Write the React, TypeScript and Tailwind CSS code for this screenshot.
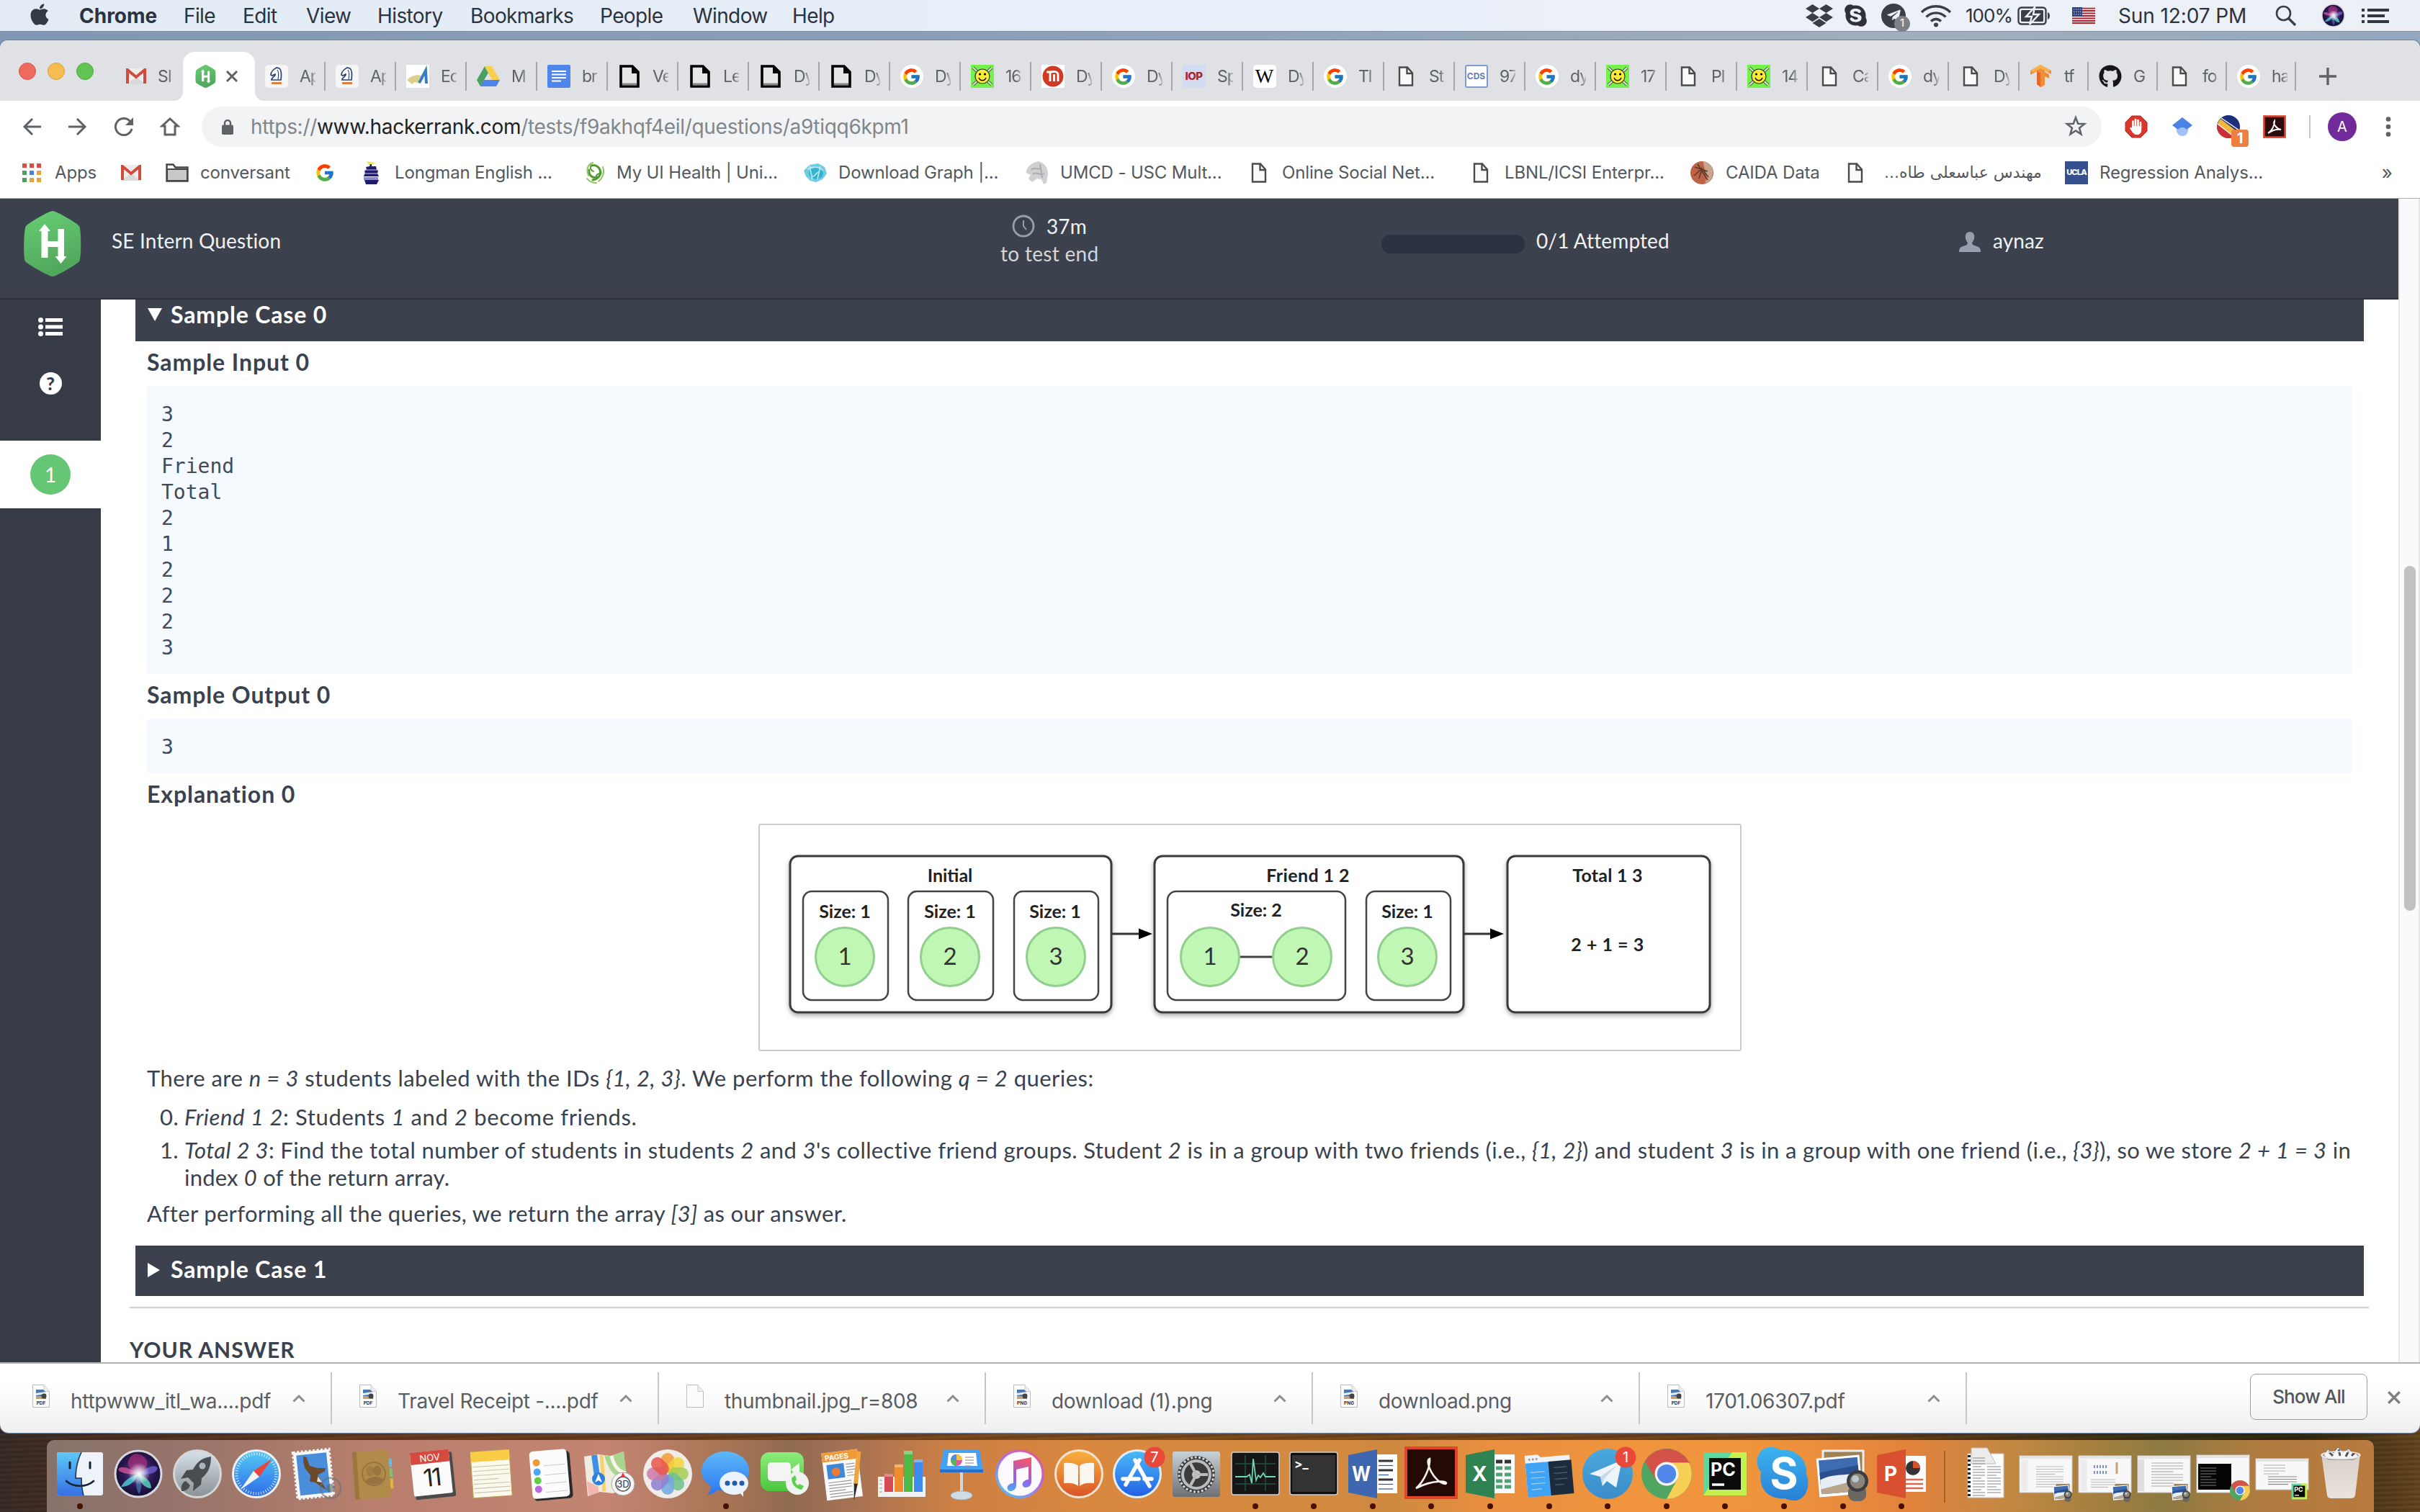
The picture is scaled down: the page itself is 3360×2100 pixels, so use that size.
import React from "react";
import { FaApple, FaDropbox, FaSkype, FaGithub, FaTelegramPlane } from "react-icons/fa";
import { FcGoogle } from "react-icons/fc";

/* ---------- small icons ---------- */

const Gmail = () => (
  <svg width="28" height="22" viewBox="0 0 28 22">
    <rect x="1" y="0" width="26" height="22" rx="2" fill="#ececec" />
    <path d="M14 12 27 22H1z" fill="#d9d9d9" />
    <path d="M2 21V2l12 10L26 2v19" fill="none" stroke="#d24a3e" strokeWidth="4" />
  </svg>
);
const FileIcon = ({ bold = false }: { bold?: boolean }) =>
  bold ? (
    <svg width="28" height="32" viewBox="0 0 28 32">
      <path d="M2 2h16l8 8v20H2z" fill="#e6e6e8" stroke="#000" strokeWidth="3.600" />
      <path d="M17 2v10h9z" fill="#000" />
      <path d="M4 27h20" stroke="#888" strokeWidth="3" />
    </svg>
  ) : (
    <svg width="22" height="28" viewBox="0 0 22 28">
      <path d="M2 1.500h11l7 8v17H2z" fill="#fafafa" stroke="#4a4a4a" strokeWidth="2.400" />
      <path d="M12.500 2v8H20" fill="none" stroke="#4a4a4a" strokeWidth="2.400" />
    </svg>
  );
const HHex = ({ size = 32 }: { size?: number }) => (
  <svg width={size} height={size * 1.11} viewBox="0 0 82 91">
    <path d="M41 0c5 0 34 17 37 21s3 45 0 49-32 21-37 21S6 74 3 70 1 25 4 21 36 0 41 0z" fill="url(#hx)" />
    <defs>
      <linearGradient id="hx" x1="0" y1="0" x2="0.3" y2="1">
        <stop offset="0" stopColor="#67cf74" />
        <stop offset="1" stopColor="#51a75c" />
      </linearGradient>
    </defs>
    <path d="M25.500 27h9v15h14V25h8.500v41h-8.500V50h-14v15h-9z" fill="#fff" />
    <path d="M30 18l8 10H22zM52.500 73l8-10h-16z" fill="#fff" />
  </svg>
);
const Knight = () => (
  <svg width="32" height="32" viewBox="0 0 32 32">
    <rect width="32" height="32" rx="5" fill="#f6f6f6" />
    <path d="M9 21h13c1-7 1-13-2-16l-4-1c-4 2-8 6-8 10l2 1 4-2c1 3-5 4-5 8z" fill="#fff" stroke="#2c4170" strokeWidth="1.700" />
    <path d="M17 7c2 3 2 8 1 13" fill="none" stroke="#2c4170" strokeWidth="1.200" />
    <path d="M9 25.500h14" stroke="#d9813f" strokeWidth="3" />
  </svg>
);
const EdIcon = () => (
  <svg width="32" height="32" viewBox="0 0 32 32">
    <rect width="32" height="32" fill="#fff" />
    <path d="M1 21c6-6 14-8 20-6l-4 6 3 5-8-2-4 3z" fill="#dccf8c" />
    <path d="M18 25 27 8l1 18" fill="none" stroke="#3a7cc0" strokeWidth="4" />
  </svg>
);
const Drive = () => (
  <svg width="32" height="28" viewBox="0 0 32 28">
    <path d="M11 0 0 19l5 9L16 9z" fill="#48a160" />
    <path d="M11 0h10l11 19H21z" fill="#f8cf4e" />
    <path d="M10 19h22l-5 9H5z" fill="#4d84ec" />
  </svg>
);
const Docs = () => (
  <svg width="32" height="32" viewBox="0 0 32 32">
    <rect width="32" height="32" rx="2" fill="#4f86ec" />
    <path d="M6 9h20M6 13.500h20M6 18h20M6 22.500h13" stroke="#fff" strokeWidth="2.200" />
  </svg>
);
const Google = () => (
  <span className="flex size-8 items-center justify-center rounded-full bg-white">
    <FcGoogle size={27} />
  </span>
);
const Smile = () => (
  <svg width="32" height="32" viewBox="0 0 32 32">
    <rect width="32" height="32" fill="#72f24a" />
    <path d="M3 4l26 24M29 4 3 28" stroke="#555" strokeWidth="4" />
    <path d="M3 4l26 24M29 4 3 28" stroke="#d8f5c0" strokeWidth="2" />
    <circle cx="16" cy="16" r="10" fill="#fdea34" stroke="#333" strokeWidth="1.200" />
    <circle cx="12.500" cy="13" r="1.600" />
    <circle cx="19.500" cy="13" r="1.600" />
    <path d="M11 18c2 5 8 5 10 0" fill="none" stroke="#000" strokeWidth="1.400" />
  </svg>
);
const RedN = () => (
  <svg width="32" height="32" viewBox="0 0 32 32">
    <rect width="32" height="32" fill="#fff" />
    <circle cx="16" cy="16" r="14.500" fill="#d03a22" />
    <path d="M7 10h5c6-1 11-1 11 4v9M12 10v13M17.500 13v10" fill="none" stroke="#fff" strokeWidth="2.800" />
  </svg>
);
const Iop = () => (
  <span className="flex size-8 items-center justify-center bg-[#d2dcf3] text-[15px] font-extrabold tracking-[-0.5px] text-[#b0232a]">IOP</span>
);
const Wiki = () => (
  <span className="flex size-8 items-center justify-center rounded-[5px] bg-white font-['Liberation_Serif',serif] text-[27px] text-black">W</span>
);
const Cds = () => (
  <span className="flex size-8 items-center justify-center rounded-[3px] border-2 border-[#7f9cc8] bg-white text-[12px] font-bold text-[#5f80b5]">CDS</span>
);
const Tf = () => (
  <svg width="32" height="32" viewBox="0 0 32 32">
    <path d="M15 0 1 8v6l9-5v18l6 4 5-3V16l6 3v-6l-6-3V8l9 5V8z" fill="#ef8e36" />
    <path d="M15 0 1 8l4 2 10-5 9 5 6-2z" fill="#f9b24b" />
    <path d="M10 9l5 2v20l-5-4z" fill="#e4672b" />
  </svg>
);
const Github = () => <FaGithub size={32} color="#17151a" />;

const XMark = ({ s = 18, c = "#5f6368", w = 3 }: { s?: number; c?: string; w?: number }) => (
  <svg width={s} height={s} viewBox="0 0 18 18">
    <path d="M2 2l14 14M16 2 2 16" stroke={c} strokeWidth={w} />
  </svg>
);

/* ---------- menu bar ---------- */

const MENU: [string, string][] = [
  ["File", "w-[82px]"],
  ["Edit", "w-[88px]"],
  ["View", "w-[99px]"],
  ["History", "w-[129px]"],
  ["Bookmarks", "w-[180px]"],
  ["People", "w-[129px]"],
  ["Window", "w-[138px]"],
  ["Help", "w-[80px]"],
];

const Siri = ({ size }: { size: number }) => (
  <svg width={size} height={size} viewBox="0 0 68 68">
    <defs>
      <radialGradient id="siri" cx="0.5" cy="0.45" r="0.6">
        <stop offset="0" stopColor="#5b4a9c" />
        <stop offset="0.6" stopColor="#2a1750" />
        <stop offset="1" stopColor="#0d1030" />
      </radialGradient>
      <radialGradient id="glow">
        <stop offset="0" stopColor="#fff" />
        <stop offset="0.35" stopColor="#fff" stopOpacity=".7" />
        <stop offset="1" stopColor="#fff" stopOpacity="0" />
      </radialGradient>
    </defs>
    <circle cx="34" cy="34" r="33.500" fill="#d8d8de" />
    <circle cx="34" cy="34" r="30.500" fill="url(#siri)" />
    <path d="M34 34C18 30 14 12 30 6c20 2 22 20 4 28z" fill="#c0307e" opacity=".6" />
    <path d="M34 34C20 24 8 22 6 28c2 4 14 8 28 6z" fill="#d85a9c" opacity=".75" />
    <path d="M34 34C22 38 14 44 10 52c10 0 20-6 24-18z" fill="#4fe0e0" opacity=".75" />
    <path d="M34 34c12-10 24-14 27-8-2 8-14 10-27 8z" fill="#7a68e0" opacity=".7" />
    <path d="M34 34c2 12 8 20 18 20 0-10-8-16-18-20z" fill="#5fe8c8" opacity=".75" />
    <path d="M34 34c-4 10-4 20 1 28 5-8 4-18-1-28z" fill="#49a8d8" opacity=".5" />
    <circle cx="35" cy="34" r="15" fill="url(#glow)" />
  </svg>
);

function MenuBar() {
  return (
    <div className="flex h-11 items-center border-b border-[#7e92ab] bg-[linear-gradient(90deg,#e3ebf5,#e7eff8_50%,#edf0f9_75%,#ecf0f6)] text-[28px] text-[#2b3340]">
      <div className="flex w-[110px] justify-center"><FaApple size={34} color="#333a45" className="-mt-1" /></div>
      <span className="w-[145px] text-[28px] font-bold">Chrome</span>
      {MENU.map(([t, w]) => (
        <span key={t} className={`${w} whitespace-nowrap tracking-[-0.6px]`}>{t}</span>
      ))}
      <div className="ml-auto flex items-center">
        <FaDropbox size={38} color="#3a3f47" />
        <FaSkype size={35} color="#2e3136" className="ml-[14px]" />
        <span className="relative ml-[18px] flex size-[34px] items-center justify-center rounded-full bg-[#3a3f47]">
          <FaTelegramPlane size={21} color="#eef2f8" />
          <span className="absolute -right-[6px] -bottom-[5px] flex size-[22px] items-center justify-center rounded-full bg-[#7d8187] text-[15px] text-white">1</span>
        </span>
        <svg width="44" height="32" viewBox="0 0 44 32" className="ml-[20px]">
          <g fill="none" stroke="#3a3f47" strokeWidth="3.400">
            <path d="M2 11C13 0 31 0 42 11" />
            <path d="M8.500 17.500c8-7.500 19-7.500 27 0" />
            <path d="M15 23.500c4.500-4 9.500-4 14 0" />
          </g>
          <circle cx="22" cy="28.500" r="3" fill="#3a3f47" />
        </svg>
        <span className="ml-[19px] w-[72px] text-[26px] tracking-[-1px]">100%</span>
        <svg width="46" height="26" viewBox="0 0 46 26">
          <rect x="1.500" y="1.500" width="38" height="23" rx="4" fill="none" stroke="#3a3f47" strokeWidth="2.400" />
          <path d="M42 8v10c4-1 4-9 0-10z" fill="#3a3f47" />
          <rect x="5" y="5" width="31" height="16" rx="1.500" fill="#3a3f47" />
          <path d="M24 1 12 14h8l-3 11 13-14h-8z" fill="#3a3f47" stroke="#eef2f8" strokeWidth="2.400" />
        </svg>
        <svg width="32" height="23" viewBox="0 0 32 23" className="ml-[30px]">
          <rect width="32" height="23" fill="#f4f0f0" />
          <path d="M0 1.600h32M0 5h32M0 8.500h32M0 12h32M0 15.500h32M0 19h32M0 22h32" stroke="#b3202c" strokeWidth="1.800" />
          <rect width="14" height="13" fill="#31407a" />
          <path d="M2 3h11M2 6.500h11M2 10h11" stroke="#cdd3e6" strokeWidth="1.200" strokeDasharray="1.500 1.500" />
        </svg>
        <span className="ml-[32px] w-[180px] whitespace-nowrap tracking-[-0.1px]">Sun 12:07 PM</span>
        <svg width="30" height="30" viewBox="0 0 30 30" className="ml-[38px]">
          <circle cx="11.500" cy="11.500" r="9.500" fill="none" stroke="#3a3f47" strokeWidth="2.600" />
          <path d="M18.500 18.500 28 28" stroke="#3a3f47" strokeWidth="3.400" />
        </svg>
        <span className="ml-[34px]"><Siri size={33} /></span>
        <svg width="38" height="20" viewBox="0 0 38 20" className="mr-[43px] ml-[23px]">
          <path d="M0 2h4M8 2h30M0 10h4M8 10h24M0 18h4M8 18h30" stroke="#33373e" strokeWidth="3.800" />
        </svg>
      </div>
    </div>
  );
}

/* ---------- tab strip ---------- */

type Tab = [React.ReactNode, string];
const TABS: Tab[] = [
  [<Knight />, "Ap"], [<Knight />, "Ap"], [<EdIcon />, "Ec"], [<Drive />, "M"], [<Docs />, "br"],
  [<FileIcon bold />, "Ve"], [<FileIcon bold />, "Le"], [<FileIcon bold />, "Dy"], [<FileIcon bold />, "Dy"],
  [<Google />, "Dy"], [<Smile />, "16"], [<RedN />, "Dy"], [<Google />, "Dy"], [<Iop />, "Sp"],
  [<Wiki />, "Dy"], [<Google />, "Tl"], [<FileIcon />, "St"], [<Cds />, "97"], [<Google />, "dy"],
  [<Smile />, "17"], [<FileIcon />, "Pl"], [<Smile />, "14"], [<FileIcon />, "Ca"], [<Google />, "dy"],
  [<FileIcon />, "Dy"], [<Tf />, "tf"], [<Github />, "G"], [<FileIcon />, "fo"], [<Google />, "ha"],
];

const TabText = ({ t }: { t: string }) => (
  <span className="w-[22px] overflow-hidden text-[23px] leading-[30px] tracking-[-1px] whitespace-nowrap text-[#5f6368] [mask-image:linear-gradient(90deg,#000_65%,rgba(0,0,0,0.3))]">{t}</span>
);

function TabStrip() {
  return (
    <div className="flex h-[84px] items-end rounded-t-[10px] bg-[#dfe1e5]">
      <div className="flex h-[68px] w-[158px] items-center gap-4 pb-[14px] pl-[26px]">
        <span className="size-6 rounded-full border border-[#d6534c] bg-[#ee6a5f]" />
        <span className="size-6 rounded-full border border-[#d9a03c] bg-[#f5bd4f]" />
        <span className="size-6 rounded-full border border-[#4fa73e] bg-[#61c554]" />
      </div>
      <div className="flex h-[68px] w-24 items-center">
        <span className="flex w-[61px] justify-center"><Gmail /></span>
        <TabText t="SI" />
      </div>
      <div className="relative flex h-[68px] w-[100px] items-center rounded-t-[16px] bg-white pl-[17px]">
        <svg width="14" height="14" className="absolute bottom-0 -left-[14px]"><path d="M14 0v14H0C10 14 14 8 14 0z" fill="#fff" /></svg>
        <svg width="14" height="14" className="absolute -right-[14px] bottom-0"><path d="M0 0v14h14C4 14 0 8 0 0z" fill="#fff" /></svg>
        <HHex size={29} />
        <span className="ml-[13px]"><XMark s={18} /></span>
      </div>
      {TABS.map(([icon, t], i) => (
        <div key={i} className={`${i < 25 ? "w-[98px]" : "w-24"} flex h-[68px] items-center`}>
          <span className="flex w-[62px] shrink-0 justify-center pr-[3px]">{icon}</span>
          <TabText t={t} />
          <span className="ml-auto h-10 w-[2px] bg-[#a3a6aa]" />
        </div>
      ))}
      <div className="flex h-[68px] items-center pl-8">
        <svg width="24" height="24" viewBox="0 0 24 24"><path d="M12 0v24M0 12h24" stroke="#5f6368" strokeWidth="3.400" /></svg>
      </div>
    </div>
  );
}

/* ---------- toolbar and bookmarks ---------- */

function Toolbar() {
  return (
    <div className="flex h-16 items-center bg-white pt-2">
      <div className="flex w-[280px] items-center pl-[31px]">
        <svg width="26" height="26" viewBox="0 0 26 26" fill="none" stroke="#5f6368" strokeWidth="3"><path d="M26 13H3M14 2 3 13l11 11" /></svg>
        <svg width="26" height="26" viewBox="0 0 26 26" fill="none" stroke="#5f6368" strokeWidth="3" className="ml-[38px]"><path d="M0 13h23M12 2l11 11-11 11" /></svg>
        <svg width="28" height="28" viewBox="0 0 28 28" className="ml-[37px]">
          <path d="M23 7A11.500 11.500 0 1 0 25 17" fill="none" stroke="#5f6368" strokeWidth="3" />
          <path d="M27 1v11H16z" fill="#5f6368" />
        </svg>
        <svg width="28" height="26" viewBox="0 0 28 26" className="ml-[36px]"><path d="M7 12v12h14V12h4L14 2 3 12z" fill="none" stroke="#5f6368" strokeWidth="3" /></svg>
      </div>
      <div className="flex h-14 w-[2638px] items-center rounded-full bg-[#f1f3f4] text-[28px] tracking-[-0.3px] text-[#80868b]">
        <svg width="16" height="21" viewBox="0 0 16 21" className="ml-7">
          <rect y="7.500" width="16" height="13.500" rx="2" fill="#5f6368" />
          <path d="M4 9V5a4 4 0 0 1 8 0v4" fill="none" stroke="#5f6368" strokeWidth="2.400" />
        </svg>
        <span className="ml-[24px] whitespace-nowrap">https://<span className="text-[#202124]">www.hackerrank.com</span>/tests/f9akhqf4eil/questions/a9tiqq6kpm1</span>
        <svg width="32" height="32" viewBox="0 0 24 24" className="mr-[20px] ml-auto">
          <path d="m12 2.500 2.400 6.300 6.700.3-5.300 4.200 1.800 6.500-5.600-3.700-5.600 3.700 1.800-6.500L2.900 9.100l6.700-.3z" fill="none" stroke="#5f6368" strokeWidth="1.900" />
        </svg>
      </div>
      <svg width="32" height="32" viewBox="0 0 32 32" className="ml-8">
        <path d="M10 1h12l9 9v12l-9 9H10l-9-9V10z" fill="#d9372c" stroke="#b8271f" strokeWidth="1" />
        <path d="M11.500 17V8.500M15 15V6M18.500 15V7M22 18V10" fill="none" stroke="#fff" strokeWidth="2.600" strokeLinecap="round" />
        <path d="M10.200 15h13v6c0 3-2 5-4 6h-4c-3-1-6-5-8-9 1-2 2-1 3 0z" fill="#fff" />
      </svg>
      <svg width="28" height="28" viewBox="0 0 28 28" className="ml-[34px]">
        <circle cx="14" cy="19" r="8" fill="#a2c1f8" />
        <path d="M14 1 0 12l8 6c2-4 10-4 12 0l8-6z" fill="#4b82e4" />
      </svg>
      <span className="relative ml-[34px] flex">
        <svg width="32" height="32" viewBox="0 0 32 32">
          <circle cx="16" cy="16" r="16" fill="#1d2f7b" />
          <path d="M5 5 30 24a16 16 0 0 1-28-1A16 16 0 0 1 5 5z" fill="#f2b73c" />
          <path d="M1 12l23 18A16 16 0 0 1 1 12z" fill="#cc2f35" />
          <path d="M6 4l25 17M1 12l23 18" stroke="#fff" strokeWidth="1.500" />
        </svg>
        <span className="absolute top-5 left-5 flex h-6 w-6 items-center justify-center rounded-[4px] bg-[#ee7f3f] text-[20px] leading-none font-bold text-white">1</span>
      </span>
      <svg width="32" height="32" viewBox="0 0 32 32" className="ml-[32px]">
        <rect x="1.500" y="1.500" width="29" height="29" fill="#2b0b0b" stroke="#d8402a" strokeWidth="2.600" />
        <path d="M7 25c5-3 9-10 9-17-3 4 3 11 9 12-5-1-12 1-18 5z" fill="none" stroke="#fff" strokeWidth="2" />
      </svg>
      <span className="ml-8 h-8 w-[2px] bg-[#c4c7cb]" />
      <span className="ml-6 flex size-10 items-center justify-center rounded-full bg-[#702a9c] text-[20px] text-white">A</span>
      <svg width="8" height="28" viewBox="0 0 8 28" className="ml-10" fill="#5f6368"><circle cx="4" cy="3.500" r="3.300" /><circle cx="4" cy="14" r="3.300" /><circle cx="4" cy="24.500" r="3.300" /></svg>
    </div>
  );
}

const Apps = () => (
  <svg width="26" height="26" viewBox="0 0 26 26">
    <path d="M0 3h6M10 3h6M20 3h6" stroke="#df4b3f" strokeWidth="6" />
    <path d="M0 13h6" stroke="#4c9e5f" strokeWidth="6" />
    <path d="M10 13h6" stroke="#4482ea" strokeWidth="6" />
    <path d="M20 13h6M10 23h6M20 23h6" stroke="#e3a43a" strokeWidth="6" />
    <path d="M0 23h6" stroke="#4c9e5f" strokeWidth="6" />
  </svg>
);
const Folder = () => (
  <svg width="32" height="26" viewBox="0 0 32 26">
    <path d="M1.500 24.500v-23h9l3 4h17v19z" fill="#fff" stroke="#454545" strokeWidth="2.400" />
    <path d="M2 8h28v16H2z" fill="#c9c9c9" stroke="#454545" strokeWidth="2" />
  </svg>
);
const Ship = () => (
  <svg width="26" height="32" viewBox="0 0 26 32">
    <path d="M7 0l12 2-5 3h-4z" fill="#f3e34d" />
    <path d="M12 4h2v3h6l1 5 2 1-1 4 2 4H3l2-5-1-2 3-3-1-3 5-1z" fill="#1e1a6e" />
    <path d="M4 12h19M3 17h20" stroke="#c9c8e6" strokeWidth="1" />
    <path d="M3 22h20v4H3z" fill="#8c8ac6" />
    <path d="M4 26h20l-3 6H6z" fill="#1e1a6e" />
  </svg>
);
const Swirl = () => (
  <svg width="30" height="32" viewBox="0 0 30 32" fill="none" strokeLinecap="round">
    <path d="M10 6c8-2 13 4 13 11M22 12c2 8-3 13-10 14M18 22c-7 2-12-3-11-10" stroke="#4f9a2c" strokeWidth="3" />
    <path d="M12 2C4 5 3 12 6 20M26 8c3 8-1 16-6 20M4 24c4 5 8 6 13 6" stroke="#8fc35a" strokeWidth="2" />
    <path d="M9 7c-1 3 1 6 4 7M22 17c-2 0-4 1-5 3" stroke="#4f9a2c" strokeWidth="2" />
  </svg>
);
const Globe = () => (
  <svg width="32" height="26" viewBox="0 0 32 26">
    <path d="M8 2 20 0l9 5 3 9-6 8-9 4-8-2-6-6-3-8z" fill="#6fcbe0" />
    <ellipse cx="17" cy="14" rx="10" ry="8" fill="#36b2d3" />
    <path d="M5 8c8-5 17-3 22 2M11 18c4 2 6-6 10-6M8 3l4 20M23 4l-4 18" stroke="#bfe9f0" strokeWidth="1.600" fill="none" />
  </svg>
);
const Brain = () => (
  <svg width="32" height="32" viewBox="0 0 32 32">
    <path d="M18 0c8 2 13 9 13 17l-2 13-4 2-3-7-6-1-7 5-5-5 3-5-6-3c-1-7 8-15 17-16z" fill="#d0d0d2" />
    <path d="M8 12c4-6 9 2 14-3M10 18c5-5 9 3 16-1M20 4l3 19" stroke="#aaaab0" strokeWidth="2" fill="none" />
  </svg>
);
const Caida = () => (
  <svg width="32" height="32" viewBox="0 0 32 32">
    <circle cx="16" cy="16" r="16" fill="#bd6347" />
    <path d="M18 0a16 16 0 0 1 2 31c6-12-2-20-2-31z" fill="#c9a58e" />
    <path d="M6 8l18 6M12 24l4-14 9 12M16 10 5 20M10 4l14 22" stroke="#5c382b" strokeWidth="1.500" fill="none" />
  </svg>
);
const Ucla = () => (
  <span className="flex size-8 items-center justify-center bg-[#34508f] text-[11px] font-extrabold tracking-[-0.8px] text-white">UCLA</span>
);

const MARKS: [React.ReactNode, string, string, string][] = [
  [<Apps />, "Apps", "w-[138px]", "w-[48px]"],
  [<Gmail />, "", "w-[64px]", "w-[48px]"],
  [<Folder />, "conversant", "w-[205px]", "w-[48px]"],
  [<FcGoogle size={28} />, "", "w-[64px]", "w-[48px]"],
  [<Ship />, "Longman English ...", "w-[311px]", "w-[49px]"],
  [<Swirl />, "My UI Health | Uni...", "w-[306px]", "w-[46px]"],
  [<Globe />, "Download Graph |...", "w-[308px]", "w-[48px]"],
  [<Brain />, "UMCD - USC Mult...", "w-[308px]", "w-[48px]"],
  [<FileIcon />, "Online Social Net...", "w-[308px]", "w-[48px]"],
  [<FileIcon />, "LBNL/ICSI Enterpr...", "w-[307px]", "w-[49px]"],
  [<Caida />, "CAIDA Data", "w-[213px]", "w-[49px]"],
  [<FileIcon />, "مهندس عباسعلی طاه...", "w-[307px]", "w-[56px]"],
  [<Ucla />, "Regression Analys...", "w-[400px]", "w-[48px]"],
];

function Bookmarks() {
  return (
    <div className="flex h-[72px] items-center border-b border-[#a8abaf] bg-white pl-7 text-[24px] text-[#54585d]">
      {MARKS.map(([icon, t, w, s], i) => (
        <div key={i} className={`${w} flex shrink-0 items-center`}>
          <span className={`${s} flex shrink-0`}><span className="flex w-8 justify-center">{icon}</span></span>
          {i === 11 ? (
            <span dir="rtl" className="font-['DejaVu_Sans',sans-serif] text-[22px] whitespace-nowrap">{t}</span>
          ) : (
            <span className="tracking-[-0.15px] whitespace-nowrap">{t}</span>
          )}
        </div>
      ))}
      <span className="mr-[38px] ml-auto text-[26px]">»</span>
    </div>
  );
}

/* ---------- page ---------- */

function TestHeader() {
  return (
    <div className="flex h-[140px] items-start border-b-2 border-[#2b303c] bg-[#3c424d] text-[28px] leading-[38px] tracking-[0.12px] text-[#f0f1f3]">
      <div className="w-[155px] pt-[17px] pl-8"><HHex size={82} /></div>
      <div className="w-[1234px] pt-[39px] tracking-[0.16px]">SE Intern Question</div>
      <div className="w-[529px] pt-[19px]">
        <div className="flex items-center pl-4">
          <svg width="32" height="32" viewBox="0 0 32 32" fill="none" stroke="#979eac" strokeWidth="2.800"><circle cx="16" cy="16" r="14" /><path d="M16 8v8l4 5" strokeWidth="2" /></svg>
          <span className="ml-[16px]">37m</span>
        </div>
        <div className="tracking-[0.3px] text-[#d3d6da]">to test end</div>
      </div>
      <div className="mt-[50px] h-[26px] w-[199px] rounded-[12px] bg-[#2c3340]" />
      <div className="w-[603px] pt-[39px] pl-[16px]">0/1 Attempted</div>
      <svg width="30" height="28" viewBox="0 0 30 28" className="mt-[46px]" fill="#979eac">
        <path d="M15 0c-5 0-7 4-6 9 .5 3 2 5 3 6l-1 3-8 3c-2 1-3 3-3 7h30c0-4-1-6-3-7l-8-3-1-3c1-1 2.500-3 3-6 1-5-1-9-6-9z" />
      </svg>
      <div className="pt-[39px] pl-[17px]">aynaz</div>
    </div>
  );
}

function Sidebar() {
  return (
    <div className="flex w-[140px] flex-col items-center bg-[#363b47]">
      <svg width="34" height="28" viewBox="0 0 34 28" className="mt-[24px]" fill="#fff">
        <path d="M10 2h24v5H10zM10 11.500h24v5H10zM10 21h24v5H10z" />
        <circle cx="3.500" cy="4.500" r="3.500" /><circle cx="3.500" cy="14" r="3.500" /><circle cx="3.500" cy="23.500" r="3.500" />
      </svg>
      <span className="mt-[49px] flex size-[31px] items-center justify-center rounded-full bg-white text-[25px] leading-none font-black text-[#363b47]">?</span>
      <div className="mt-[64px] flex h-[94px] w-full items-center justify-center bg-white">
        <span className="flex size-[56px] items-center justify-center rounded-full bg-[#65c675] text-[28px] text-white">1</span>
      </div>
    </div>
  );
}

const Node = ({ x, n }: { x: number; n: string }) => (
  <g>
    <circle cx={x} cy="185" r="40.500" fill="#c1f7b4" stroke="#90cf8d" strokeWidth="3" />
    <text x={x} y="196" textAnchor="middle" fontSize="33" fill="#333">{n}</text>
  </g>
);
const Group = ({ x, w, label, cx, y = 131 }: { x: number; w: number; label: string; cx: number; y?: number }) => (
  <g>
    <rect x={x} y="94" width={w} height="151" rx="12" fill="#fff" stroke="#444" strokeWidth="2.500" />
    <text x={cx} y={y} textAnchor="middle" fontSize="25" fontWeight="700" fill="#222">{label}</text>
  </g>
);

function Diagram() {
  return (
    <div className="h-[316px] w-[1365px] self-center rounded-[3px] border-2 border-[#cbcbcb] bg-white">
      <svg width="1361" height="312" viewBox="2 2 1361 312" className="font-['Lato',sans-serif]">
        <g fill="#fff" stroke="#3a3a3a" strokeWidth="3" className="drop-shadow-[0_3px_3px_rgba(0,0,0,0.35)]">
          <rect x="44" y="45" width="446" height="217" rx="11" />
          <rect x="550" y="45" width="429" height="217" rx="11" />
          <rect x="1040" y="45" width="281" height="217" rx="11" />
        </g>
        <g fontSize="25" fontWeight="700" fill="#222" textAnchor="middle">
          <text x="266" y="81">Initial</text>
          <text x="763" y="81" letterSpacing="0.400">Friend 1 2</text>
          <text x="1179" y="81" letterSpacing="0.200">Total 1 3</text>
          <text x="1179" y="177" letterSpacing="0.500">2 + 1 = 3</text>
        </g>
        <Group x={62} w={118} cx={120} label="Size: 1" />
        <Group x={208} w={118} cx={266} label="Size: 1" />
        <Group x={355} w={117} cx={412} label="Size: 1" />
        <Group x={568} w={247} cx={691} y={129} label="Size: 2" />
        <Group x={844} w={117} cx={901} label="Size: 1" />
        <path d="M627 185h128" stroke="#444" strokeWidth="3" />
        <Node x={120} n="1" /><Node x={266} n="2" /><Node x={413} n="3" />
        <Node x={627} n="1" /><Node x={755} n="2" /><Node x={901} n="3" />
        <path d="M491 153h40M980 153h40" stroke="#333" strokeWidth="3" />
        <path d="M528 145.500 547 153l-19 7.500zM1016 145.500 1035 153l-19 7.500z" fill="#000" />
      </svg>
    </div>
  );
}

function CaseBar({ open, label, className }: { open?: boolean; label: string; className: string }) {
  return (
    <div className={`${className} flex bg-[#3c424d] pl-[17px] text-[32px] font-bold text-white`}>
      <span className="flex w-[32px] items-center">
        <svg width="20" height="20" viewBox="0 0 20 20" fill="#fff">{open ? <path d="M0 1h20L10 19z" /> : <path d="M0 0v20l17-10z" />}</svg>
      </span>
      <span className="tracking-[0.84px]">{label}</span>
    </div>
  );
}
const Heading = ({ children, className }: { children: React.ReactNode; className: string }) => (
  <div className={`${className} pl-4 text-[32px] leading-[58px] font-bold tracking-[0.92px]`}>{children}</div>
);
const Pre = ({ lines }: { lines: string[] }) => (
  <div className="mr-4 ml-4 rounded-[5px] bg-[#f4faff] px-5 pt-[22px] pb-[18px] font-['DejaVu_Sans_Mono',monospace] text-[28px] leading-9 text-[#434b58]">
    {lines.map((l, i) => <div key={i}>{l}</div>)}
  </div>
);

function Question() {
  return (
    <div className="flex flex-1 flex-col overflow-hidden bg-white text-[#39424e]">
      <div className="mr-[48px] ml-[48px] flex flex-col">
        <CaseBar open label="Sample Case 0" className="h-[58px] leading-[42px] [&>span]:h-[42px]" />
        <Heading className="h-[62px]">Sample Input 0</Heading>
        <Pre lines={["3", "2", "Friend", "Total", "2", "1", "2", "2", "2", "3"]} />
        <Heading className="h-[62px]">Sample Output 0</Heading>
        <Pre lines={["3"]} />
        <Heading className="h-[70px]">Explanation 0</Heading>
        <Diagram />
        <div className="mt-[18px] pl-4 text-[31px] leading-[38px] tracking-[0.39px] whitespace-nowrap">
          <p className="tracking-[0.46px]">There are <i>n = 3</i> students labeled with the IDs <i>{"{1, 2, 3}"}</i>. We perform the following <i>q = 2</i> queries:</p>
          <div className="mt-4 flex tracking-[0.62px]"><span className="w-[52px] pl-[18px]">0.</span><p><i>Friend 1 2</i>: Students <i>1</i> and <i>2</i> become friends.</p></div>
          <div className="mt-2 flex">
            <span className="w-[52px] shrink-0 pl-[18px]">1.</span>
            <p>
              <i>Total 2 3</i>: Find the total number of students in students <i>2</i> and <i>3</i>'s collective friend groups. Student <i>2</i> is in a group with two friends (i.e., <i>{"{1, 2}"}</i>) and student <i>3</i> is in a group with one friend (i.e., <i>{"{3}"}</i>), so we store <i>2 + 1 = 3</i> in
              <br />
              <span className="tracking-[0.2px]">index <i>0</i> of the return array.</span>
            </p>
          </div>
          <p className="mt-3 tracking-[0.34px]">After performing all the queries, we return the array <i>[3]</i> as our answer.</p>
        </div>
        <CaseBar label="Sample Case 1" className="mt-[26px] h-[70px] leading-[66px] [&>span]:h-[67px]" />
      </div>
      <div className="mt-[15px] ml-10 h-[2px] w-[3109px] shrink-0 bg-[#d2d2d2] shadow-[0_0_6px_rgba(0,0,0,0.08)]" />
      <div className="ml-10 pt-[38px] text-[30px] leading-[38px] font-bold tracking-[1px]">YOUR ANSWER</div>
    </div>
  );
}

/* ---------- download shelf ---------- */

const DocThumb = ({ kind }: { kind: string }) => (
  <svg width="24" height="32" viewBox="0 0 24 32">
    <path d="M.5.500H16l7.500 9V31.500H.5z" fill="#fcfcfc" stroke="#bbb" />
    <path d="M16 .5v9h7.500" fill="#eee" stroke="#ccc" />
    {kind && (
      <g>
        <path d="M5 7h10l4 4v9H5z" fill="#4d77ad" />
        <path d="M5 12l14-2v3L5 15z" fill="#e8eef5" />
        <path d="M5 16h13v4H5z" fill="#c2a27e" />
        <circle cx="16" cy="16" r="3.500" fill="#444" />
        <text x="12" y="28" fontSize="6.500" fontWeight="700" textAnchor="middle" fill="#333">{kind}</text>
      </g>
    )}
  </svg>
);
const FILES: [string, string][] = [
  ["httpwww_itl_wa....pdf", "PDF"],
  ["Travel Receipt -....pdf", "PDF"],
  ["thumbnail.jpg_r=808", ""],
  ["download (1).png", "PNG"],
  ["download.png", "PNG"],
  ["1701.06307.pdf", "PDF"],
];

function Shelf() {
  return (
    <div className="flex h-[98px] items-start rounded-b-[12px] border-t-2 border-[#b1b1b1] bg-[linear-gradient(180deg,#fff_0%,#fefefe_40%,#eeeeee_100%)] pt-3 pl-[7px] text-[28px] text-[#5a5d61]">
      {FILES.map(([n, k]) => (
        <div key={n} className="flex h-[72px] w-[454px] items-start border-r-2 border-[#c6c6c6] pl-[38px]">
          <span className="mt-[17px]"><DocThumb kind={k} /></span>
          <span className="ml-[29px] pt-[19px] leading-[42px] tracking-[-0.3px] whitespace-nowrap">{n}</span>
          <svg width="18" height="12" viewBox="0 0 18 12" className="mt-[30px] mr-[35px] ml-auto"><path d="M1.500 10.500 9 3l7.500 7.500" fill="none" stroke="#8b8d90" strokeWidth="3" /></svg>
        </div>
      ))}
      <span className="mt-[2px] ml-auto flex h-16 w-[163px] items-center justify-center rounded-[8px] border border-[#9a9da1] pb-[2px] text-[26px] font-medium tracking-[-0.9px] whitespace-nowrap text-[#53565a]">Show All</span>
      <span className="mt-[25px] mr-[26px] ml-[27px]"><XMark s={20} c="#7d7f83" /></span>
    </div>
  );
}

/* ---------- dock ---------- */

const Badge = ({ x, y, n }: { x: number; y: number; n: string }) => (
  <g>
    <circle cx={x} cy={y} r="14.500" fill="#e9493b" />
    <text x={x} y={y + 7} textAnchor="middle" fontSize="20" fill="#fff">{n}</text>
  </g>
);
const Lines = ({ x, y, w, n, gap = 4, c = "#999" }: { x: number; y: number; w: number; n: number; gap?: number; c?: string }) => (
  <g stroke={c} strokeWidth="1.200">
    {Array.from({ length: n }, (_, i) => <path key={i} d={`M${x} ${y + i * gap}h${i % 4 === 3 ? w * 0.7 : w}`} />)}
  </g>
);
const ChromeLogo = ({ cx, cy, r }: { cx: number; cy: number; r: number }) => (
  <g transform={`translate(${cx} ${cy}) scale(${r / 36})`}>
    <circle r="36" fill="#4fa562" />
    <path d="M-31-18A36 36 0 0 1 31-18L34-16H0L-15 9z" fill="#d3534a" />
    <path d="M32-16A36 36 0 0 1 0 36L15 8 4-16z" fill="#f7cf55" />
    <circle r="17" fill="#f5f5f5" />
    <circle r="13.500" fill="#5187e8" />
  </g>
);
const Photo = () => (
  <g>
    <rect x="8" y="4" width="56" height="50" fill="#a08355" stroke="#eee" strokeWidth="3" />
    <g transform="rotate(-5 32 40)">
      <rect x="1" y="12" width="60" height="54" fill="#fff" />
      <rect x="4" y="15" width="54" height="47" fill="#3d6cb0" />
      <path d="M4 32l54-6v12L4 50z" fill="#2c4f90" />
      <path d="M4 42c18-8 34-2 54-6v10L4 56z" fill="#e8eef5" />
      <path d="M4 55l54-9v16H4z" fill="#b9a68d" />
    </g>
    <rect x="43" y="52" width="25" height="22" rx="9" fill="#6a6762" />
    <circle cx="56" cy="46" r="15" fill="#3a3d42" />
    <circle cx="56" cy="46" r="10.500" fill="#8b8579" />
    <circle cx="53" cy="43" r="5" fill="#b9c4cc" />
  </g>
);
const PyCharm = () => (
  <g>
    <rect x="10" y="10" width="60" height="60" fill="#5dd9a0" />
    <path d="M70 10v60H10l20-30L50 10z" fill="#c5f04f" />
    <rect x="18" y="18" width="44" height="44" fill="#0b0b0b" />
    <text x="20" y="43" fontSize="25" fontWeight="700" fill="#fff">PC</text>
    <path d="M22 55h17" stroke="#fff" strokeWidth="3.500" />
  </g>
);

const G = ({ id, a, b }: { id: string; a: string; b: string }) => (
  <linearGradient id={id} x1="0" y1="0" x2="0" y2="1"><stop offset="0" stopColor={a} /><stop offset="1" stopColor={b} /></linearGradient>
);

const APPS: [React.ReactNode, boolean][] = [
  [<g>
    <G id="fi" a="#5cc8f7" b="#3671e6" />
    <rect x="8" y="10" width="64" height="60" rx="3" fill="#eef3fa" />
    <path d="M8 13q0-3 3-3h31c-6 12-8 24-8 36h8c0 10 1 17 3 24H11q-3 0-3-3z" fill="url(#fi)" />
    <path d="M42 10c-6 12-8 24-8 36h8c0 10 1 17 3 24" fill="none" stroke="#1d3557" strokeWidth="1.600" />
    <path d="M26 24v8M54 24v8" stroke="#152536" strokeWidth="3" strokeLinecap="round" />
    <path d="M21 50c10 9 28 9 38 0" fill="none" stroke="#152536" strokeWidth="2.600" strokeLinecap="round" />
  </g>, true],
  [<g transform="translate(6 6)"><Siri size={68} /></g>, false],
  [<g>
    <G id="lp" a="#d5e0e6" b="#8b9298" />
    <circle cx="40" cy="40" r="34" fill="#d4d6d8" /><circle cx="40" cy="40" r="31" fill="url(#lp)" />
    <path d="M59 16c-13 2-20 8-25 18l-9 1-8 12 10-2 8 8-1 11 11-9 1-9c8-6 13-15 13-30z" fill="#4a4d50" />
    <circle cx="47" cy="29" r="4.500" fill="#aab3b8" /><path d="M24 50c-6 2-7 8-6 14 6 0 10-3 12-8z" fill="#4a4d50" />
  </g>, false],
  [<g>
    <G id="sf" a="#54c8f5" b="#2d6be8" />
    <circle cx="40" cy="40" r="34" fill="#eef0f2" /><circle cx="40" cy="40" r="31" fill="url(#sf)" />
    <circle cx="40" cy="40" r="27.500" fill="none" stroke="#dff1fb" strokeWidth="4" strokeDasharray="1 2.600" />
    <path d="M62 19 44 44l-8-8z" fill="#e8463c" /><path d="M18 62 36 36l8 8z" fill="#f4f4f4" />
  </g>, false],
  [<g transform="rotate(-6 40 40)">
    <rect x="13" y="8" width="50" height="64" fill="#fafafa" stroke="#f4f4f4" strokeWidth="4" strokeDasharray="3 2.500" />
    <rect x="17" y="12" width="42" height="56" fill="#4a8ddb" />
    <path d="M27 14l4 2 3 12 10 4 12 2-2 4-10 4 6 14 4 8-8-6-6-6-8-2 2-8-7-12-1-10z" fill="#6b4a2c" />
    <path d="M44 44l5 9-7-2z" fill="#e8e0d4" />
    <circle cx="60" cy="62" r="14" fill="none" stroke="#6b6f76" strokeWidth="2.500" opacity=".6" /><circle cx="60" cy="62" r="6" fill="#566" opacity=".6" />
  </g>, false],
  [<g transform="rotate(-4 40 40)">
    <path d="M60 20h6v12h-6z" fill="#6cb9d8" /><path d="M60 34h6v12h-6z" fill="#7ac672" /><path d="M60 48h6v14h-6z" fill="#e3b43c" />
    <rect x="12" y="8" width="50" height="66" rx="4" fill="#b18b4a" /><rect x="12" y="8" width="6" height="66" fill="#9a773d" />
    <circle cx="40" cy="40" r="16" fill="none" stroke="#967440" strokeWidth="2" /><ellipse cx="35" cy="36" rx="5.500" ry="7" fill="#a07d42" /><ellipse cx="45" cy="36" rx="5.500" ry="7" fill="#967440" /><path d="M28 50c3-8 22-8 25 0-8 6-18 6-25 0z" fill="#967440" />
  </g>, false],
  [<g transform="rotate(-6 40 40)">
    <rect x="14" y="12" width="56" height="62" rx="2" fill="#4a4a4c" /><rect x="12" y="8" width="54" height="61" rx="2" fill="#fbfbfb" />
    <rect x="12" y="8" width="54" height="17" fill="#d5493f" />
    <text x="39" y="22" fontSize="13" textAnchor="middle" fill="#fff">NOV</text>
    <text x="39" y="57" fontSize="34" textAnchor="middle" fill="#222" letterSpacing="-2">11</text>
  </g>, false],
  [<g transform="rotate(-4 40 40)">
    <rect x="13" y="8" width="54" height="64" fill="#fbf9ec" stroke="#b9a15a" strokeWidth="1" /><rect x="13" y="8" width="54" height="14" fill="#f8cd45" />
    <Lines x={15} y={29} w={50} n={7} gap={6} c="#c9c5b2" />
  </g>, false],
  [<g transform="rotate(-5 40 40)">
    <rect x="15" y="10" width="54" height="66" rx="5" fill="#2b2b2b" /><rect x="13" y="7" width="52" height="66" rx="5" fill="#fcfcfc" />
    <circle cx="22" cy="23" r="5" fill="#f09a37" /><circle cx="22" cy="36" r="5" fill="#48a8f5" /><circle cx="22" cy="48" r="5" fill="#65cc4a" /><circle cx="22" cy="60" r="5" fill="#b86be0" />
    <path d="M32 28h30M32 41h30M32 53h30M32 65h30" stroke="#ccc" />
  </g>, false],
  [<g>
    <path d="M6 16l19-3 18 2 18-6 5 52-20 6-18-2-17 6z" fill="#f1ece0" />
    <path d="M34 14l9 1 18-6 4 34c-14 4-24-4-31-29z" fill="#a9d58c" /><path d="M44 15c3 14 10 22 20 24" fill="none" stroke="#f7f3ea" strokeWidth="5" />
    <path d="M30 14l4 50" stroke="#f5d36b" strokeWidth="5" /><path d="M20 14l5 36" stroke="#3f8fe6" strokeWidth="8" />
    <path d="M10 50l16 8v8l-14 4z" fill="#f2b8b0" />
    <circle cx="26" cy="47" r="9" fill="#2f80dd" /><path d="M26 40l5 12-5-3-5 3z" fill="#fff" />
    <circle cx="60" cy="54" r="16" fill="#f6f6f8" stroke="#aaa" /><circle cx="60" cy="54" r="10" fill="none" stroke="#555" strokeWidth="1.500" /><text x="60" y="59" fontSize="13" textAnchor="middle" fill="#333">3D</text><path d="M60 38l3 6h-6z" fill="#e33" />
  </g>, false],
  [<g>
    <circle cx="40" cy="40" r="34" fill="#efece9" />
    {["#f39a33", "#f3d43b", "#a6ce54", "#6ec288", "#6fa8e0", "#8f7fd0", "#c97aa8", "#e8554c"].map((c, i) => (
      <rect key={c} x="31" y="11" width="18" height="28" rx="9" fill={c} opacity=".85" transform={`rotate(${i * 45} 40 40)`} />
    ))}
  </g>, false],
  [<g>
    <G id="ms" a="#5fb8f9" b="#2a77f2" />
    <path d="M39 9c19 0 33 12 33 27S58 64 39 64c-4 0-8-1-11-2-4 5-9 7-14 7 4-4 5-8 5-12C10 51 6 44 6 36 6 21 20 9 39 9z" fill="url(#ms)" />
    <ellipse cx="51" cy="53" rx="20" ry="16" fill="#eaf3fb" /><path d="M58 65l6 7V62z" fill="#eaf3fb" /><g fill="#2659a8"><circle cx="42" cy="53" r="3.500" /><circle cx="52" cy="53" r="3.500" /><circle cx="62" cy="53" r="3.500" /></g>
  </g>, true],
  [<g>
    <G id="ft" a="#8bee7c" b="#4cc53d" />
    <rect x="6" y="10" width="60" height="54" rx="12" fill="url(#ft)" />
    <rect x="16" y="24" width="32" height="26" rx="5" fill="#f4f4f4" /><path d="M48 34l12-9v22z" fill="#f4f4f4" />
    <circle cx="57" cy="53" r="16" fill="#f0f3f0" /><path d="M49 46c0 9 6 15 14 16l3-5-6-3-2 2c-2-1-4-4-4-6l2-2-2-6z" fill="#5bd24c" />
  </g>, false],
  [<g transform="rotate(-7 40 40)">
    <rect x="12" y="8" width="50" height="66" fill="#fafafa" /><rect x="12" y="8" width="50" height="13" fill="#f09a37" />
    <text x="16" y="19" fontSize="10" fontWeight="700" fill="#fff">PAGES</text>
    <rect x="17" y="25" width="24" height="20" fill="#3f87d9" /><circle cx="29" cy="36" r="6" fill="#ef7a30" />
    <Lines x={17} y={50} w={32} n={6} /><Lines x={44} y={27} w={12} n={5} />
    <path d="M67 12 57 58l-6-1 10-46z" fill="#f0a53c" /><path d="M57 56l-5-1-3 24z" fill="#2a2a2a" />
  </g>, false],
  [<g>
    <rect x="6" y="44" width="66" height="28" fill="#f1f1f1" />
    <path d="M10 48v18" stroke="#aaa" strokeWidth="3" strokeDasharray="1.500 4" />
    <rect x="15" y="40" width="12" height="25" fill="#d84a55" /><rect x="29" y="27" width="12" height="38" fill="#ee8c2e" /><rect x="42" y="8" width="12" height="57" fill="#4fb944" /><rect x="56" y="20" width="12" height="45" fill="#3d8bef" />
    <path d="M15 40h12v4H15zM29 27h12v4H29zM42 8h12v5H42zM56 20h12v4H56z" fill="#fff" opacity=".35" />
  </g>, false],
  [<g>
    <path d="M15 7h50l5 27H10z" fill="#43a0f3" /><path d="M10 34h60v4H10z" fill="#2b6fc4" />
    <path d="M22 11h38l2 18H20z" fill="#fff" /><circle cx="33" cy="21" r="8" fill="#e05aa0" /><path d="M33 13a8 8 0 0 1 8 8h-8z" fill="#f3c13c" /><path d="M33 29a8 8 0 0 1-8-8h8z" fill="#57b857" /><path d="M25 21a8 8 0 0 1 8-8v8z" fill="#4a8fe8" />
    <Lines x={45} y={17} w={12} n={4} />
    <rect x="38" y="38" width="4" height="30" fill="#d3d8de" /><ellipse cx="40" cy="70" rx="15" ry="6" fill="#cfdbe6" stroke="#aab6c2" />
  </g>, false],
  [<g>
    <linearGradient id="itb" x1="1" y1="0" x2="0.2" y2="1"><stop offset="0" stopColor="#f3566a" /><stop offset=".5" stopColor="#b06be8" /><stop offset="1" stopColor="#52c0f4" /></linearGradient>
    <linearGradient id="it" x1="0.5" y1="0" x2="0.3" y2="1"><stop offset="0" stopColor="#f3566a" /><stop offset=".6" stopColor="#9a5fe8" /><stop offset="1" stopColor="#4aa8f4" /></linearGradient>
    <circle cx="40" cy="40" r="34" fill="url(#itb)" /><circle cx="40" cy="40" r="30.500" fill="#fcfafc" />
    <path d="M31 22l25-5v34c0 5-4 8-8 8s-6-5-3-8c2-2 4-3 7-3V30l-17 4v22c0 5-4 8-8 8s-6-5-3-8c2-2 4-3 7-3z" fill="url(#it)" />
  </g>, false],
  [<g>
    <G id="ib" a="#f7b13c" b="#d9562a" />
    <circle cx="40" cy="40" r="34" fill="#f3e3d2" /><circle cx="40" cy="40" r="31" fill="url(#ib)" />
    <path d="M39 29c-4-4-12-5-20-4v28c8-1 16 0 20 4zM41 29c4-4 12-5 20-4v28c-8-1-16 0-20 4z" fill="#faf6f1" />
  </g>, false],
  [<g>
    <G id="as" a="#49b9f7" b="#2460e6" />
    <circle cx="40" cy="40" r="34" fill="#e4edf5" /><circle cx="40" cy="40" r="31" fill="url(#as)" />
    <path d="M37 21 57 57M43 21 24 55M20 47h22M50 47h10" stroke="#fff" strokeWidth="5.500" strokeLinecap="round" />
    <Badge x={64} y={17} n="7" />
  </g>, false],
  [<g>
    <G id="st" a="#c8d2d8" b="#6d7073" />
    <rect x="7" y="9" width="66" height="63" rx="3" fill="url(#st)" />
    <circle cx="40" cy="41" r="26" fill="#3b3c3e" /><circle cx="40" cy="41" r="24" fill="none" stroke="#d1d3d5" strokeWidth="3" strokeDasharray="3 2.500" />
    <circle cx="40" cy="41" r="19" fill="none" stroke="#b9bbbd" strokeWidth="4" /><circle cx="40" cy="41" r="6" fill="#c4c6c8" /><path d="M40 41 56 41M40 41 32 26M40 41 32 56" stroke="#b9bbbd" strokeWidth="4" />
  </g>, false],
  [<g>
    <rect x="7" y="10" width="66" height="59" rx="3" fill="#161616" stroke="#cfcfcf" strokeWidth="1.500" />
    <path d="M12 26h56M12 54h56M26 14v50M54 14v50" stroke="#1f5145" strokeWidth="1.500" />
    <path d="M12 44h16l4-3 3 12 2-34 4 30 3-7 3 3 4-6 3 5h14" fill="none" stroke="#6fd3b8" strokeWidth="1.800" />
  </g>, true],
  [<g>
    <rect x="7" y="10" width="66" height="59" rx="3" fill="#0f0f0f" stroke="#cfcfcf" strokeWidth="1.500" /><rect x="10" y="14" width="60" height="51" fill="#333" />
    <text x="13" y="32" fontSize="17" fontWeight="700" fill="#fff">&gt;_</text>
  </g>, true],
  [<g>
    <rect x="44" y="13" width="30" height="54" fill="#fdfdfd" /><Lines x={48} y={22} w={20} n={7} gap={6.5} c="#2b55a5" /><path d="M48 22h20M48 35h20M48 48h20" stroke="#333" strokeWidth="3" />
    <path d="M6 14l40-8v68L6 66z" fill="#3f66b0" /><text x="11" y="50" fontSize="28" fontWeight="700" fill="#fff" textLength="26" lengthAdjust="spacingAndGlyphs">W</text>
  </g>, true],
  [<g>
    <rect x="5" y="4" width="70" height="69" fill="#240a05" stroke="#e2452c" strokeWidth="4" />
    <path d="M19 60c10-8 20-28 19-41-8 2 6 34 22 35 6-4-16-7-41 6z" fill="none" stroke="#f5f0ee" strokeWidth="2.600" />
  </g>, true],
  [<g>
    <rect x="44" y="13" width="30" height="54" fill="#fdfdfd" /><path d="M48 23h9M60 23h9" stroke="#333" strokeWidth="5" /><path d="M48 32h9M60 32h9M48 41h9M60 41h9M48 50h9M60 50h9M48 58h9M60 58h9" stroke="#4ba673" strokeWidth="5" />
    <path d="M6 14l40-8v68L6 66z" fill="#2f8252" /><text x="15" y="50" fontSize="28" fontWeight="700" fill="#fff">X</text>
  </g>, true],
  [<g transform="rotate(-5 40 40)">
    <path d="M8 12h18l4 4h40v48q0 4-4 4H12q-4 0-4-4z" fill="#f0f3f5" />
    <rect x="8" y="23" width="34" height="47" fill="#41a3f3" /><rect x="40" y="23" width="32" height="47" fill="#1d2c3d" />
    <circle cx="14" cy="18" r="1.500" fill="#999" /><circle cx="19" cy="18" r="1.500" fill="#999" /><circle cx="24" cy="18" r="1.500" fill="#999" />
    <Lines x={14} y={36} w={20} n={4} gap={8} c="#a5d4fa" /><Lines x={47} y={32} w={18} n={4} gap={8} c="#4d6075" />
  </g>, true],
  [<g>
    <G id="tg" a="#4aa9de" b="#3a8cc8" />
    <circle cx="40" cy="40" r="35" fill="url(#tg)" /><path d="M15 40 60 21l-8 38-13-9-6 7-3-13z" fill="#eef5fa" /><path d="M30 44 53 28 35 47l-2 10z" fill="#c5d9e7" />
    <Badge x={65} y={17} n="1" />
  </g>, true],
  [<ChromeLogo cx={40} cy={40} r={35} />, true],
  [<PyCharm />, true],
  [<g>
    <G id="sk" a="#3cb4f0" b="#2a7fd6" />
    <path d="M22 3c6 0 10 2 13 4 22-3 38 14 36 34 6 12 1 36-17 36-6 0-10-2-13-3C18 76 4 60 8 38-2 26 2 3 22 3z" fill="url(#sk)" />
    <text x="40" y="61" fontSize="60" fontWeight="700" textAnchor="middle" fill="#fff">S</text>
  </g>, true],
  [<g transform="translate(4 4)"><Photo /></g>, true],
  [<g>
    <rect x="42" y="15" width="32" height="50" fill="#fdfdfd" /><circle cx="56" cy="32" r="10" fill="#333" /><path d="M56 32V22a10 10 0 0 1 10 10z" fill="#d35230" /><path d="M46 48h24M46 54h24M46 60h24" stroke="#d66a50" strokeWidth="2.500" />
    <path d="M6 14l40-8v68L6 66z" fill="#d8502f" /><text x="16" y="50" fontSize="28" fontWeight="700" fill="#fff">P</text>
  </g>, true],
];

const Win = ({ children, x = 3, y = 15, w = 73, h = 51 }: { children?: React.ReactNode; x?: number; y?: number; w?: number; h?: number }) => (
  <g><rect x={x} y={y} width={w} height={h} fill="#f8f8f8" stroke="#c9c9c9" /><rect x={x} y={y} width={w} height="4" fill="#e4e4e4" />{children}</g>
);
const MINI: React.ReactNode[] = [
  <g>
    <path d="M13 12h50v61H13z" fill="#fdfdfd" stroke="#c5c5c5" /><path d="M18 4h22l12 22H18z" fill="#ececec" stroke="#bbb" /><path d="M15 14v58" stroke="#222" strokeWidth="4" strokeDasharray="3 3" />
    <Lines x={20} y={18} w={17} n={14} /><Lines x={40} y={30} w={19} n={10} />
  </g>,
  <Win><Lines x={26} y={30} w={38} n={9} gap={3.5} c="#bbb" /><path d="M10 20v44" stroke="#ececec" strokeWidth="9" /><g transform="translate(50 52) scale(.36)"><Photo /></g></Win>,
  <Win><path d="M24 30h20M24 38h20" stroke="#7a93c6" strokeWidth="4" strokeDasharray="2 2" /><path d="M56 24v16" stroke="#c9a27a" strokeWidth="3" /><path d="M10 20v44" stroke="#ececec" strokeWidth="9" /><Lines x={20} y={48} w={34} n={4} gap={3.5} c="#bbb" /><g transform="translate(50 52) scale(.36)"><Photo /></g></Win>,
  <Win><Lines x={22} y={25} w={44} n={9} gap={4} c="#aaa" /><path d="M8 20v44" stroke="#dedede" strokeWidth="8" /><g transform="translate(50 52) scale(.36)"><Photo /></g></Win>,
  <Win y={14} h={52}><rect x="5" y="26" width="46" height="36" fill="#050505" /><Lines x={8} y={32} w={22} n={7} c="#666" /><ChromeLogo cx={63} cy={63} r={14} /></Win>,
  <Win y={19} h={43}><Lines x={14} y={28} w={30} n={4} c="#bbb" /><Lines x={20} y={44} w={40} n={4} gap={3.5} c="#888" /><g transform="translate(49 50) scale(.36)"><PyCharm /></g></Win>,
  <g>
    <G id="tr" a="#dcdcdc" b="#f1f1f1" />
    <path d="M12 12h54l-7 58q-1 4-6 4H26q-5 0-6-4z" fill="url(#tr)" opacity=".88" />
    <path d="M15 14 21 6l8 5 6-8 7 7 8-5 5 6 6 1 2 4-6 4H22z" fill="#f8f8f8" stroke="#777" strokeWidth="1" /><path d="M22 9l6 6M36 6l2 9M50 8l-4 8M58 11l-4 4" stroke="#555" strokeWidth="3" />
    <ellipse cx="39" cy="14" rx="27" ry="5" fill="none" stroke="#eee" strokeWidth="1.500" />
  </g>,
];

const Slot = ({ icon, dot, w }: { icon: React.ReactNode; dot?: boolean; w: string }) => (
  <div className={`${w} flex shrink-0 flex-col items-center`}>
    <svg width="80" height="80" viewBox="0 0 80 80" className="overflow-visible">{icon}</svg>
    {dot && <span className="mt-[1px] size-2 rounded-full bg-[#4a0f04]" />}
  </div>
);

function Dock() {
  return (
    <div className="mr-[64px] ml-[65px] flex h-[100px] rounded-t-[10px] bg-[linear-gradient(90deg,#86736c_0%,#94736a_5%,#b87f6c_14%,#c38572_24%,#a97556_29%,#906b50_32%,#a27055_34%,#cd8044_39%,#da883f_45%,#cf8a40_58%,#e98f40_62%,#f0953d_68%,#ee943c_74%,#e2833c_80%,#c58843_84%,#a5803f_88%,#8c7a42_91%,#b07c40_95%,#b97a3e_100%)] pt-[7px] pl-[5px]">
      {APPS.map(([icon, dot], i) => <Slot key={i} icon={icon} dot={dot} w="w-[81.6px]" />)}
      <span className="mt-2 mr-[17px] ml-[18px] h-[72px] w-[2px] shrink-0 bg-[#a8621f]" />
      {MINI.map((icon, i) => <Slot key={i} icon={icon} w="w-[82px]" />)}
    </div>
  );
}

export default function App() {
  return (
    <div className="flex h-[2100px] w-[3360px] flex-col overflow-hidden bg-[linear-gradient(90deg,#8098b5,#8b9fb8_40%,#a0afbd_80%,#93a7be),repeating-linear-gradient(178deg,rgba(0,0,0,0.22)_0px,rgba(0,0,0,0)_3px,rgba(0,0,0,0.16)_7px),linear-gradient(90deg,#3b2f29,#4b3024_3%,#6a3d20_15%,#70431f_30%,#84501f_45%,#7a4a1d_60%,#6f431f_75%,#3f3216_88%,#33290f_95%,#6b4a22)] bg-[size:100%_100px,100%_100%,100%_100%] bg-no-repeat font-['Inter',sans-serif]">
      <MenuBar />
      <div className="mt-3 flex h-[1934px] flex-col rounded-t-[10px] rounded-b-[12px] shadow-[0_0_0_1px_#6d84a0]">
        <TabStrip />
        <Toolbar />
        <Bookmarks />
        <div className="flex h-[1616px] bg-[#fafafa] font-['Lato',sans-serif]">
          <div className="flex w-[3330px] flex-col">
            <TestHeader />
            <div className="flex h-[1476px]">
              <Sidebar />
              <Question />
            </div>
          </div>
          <div className="w-[30px] border-x-2 border-[#e6e6e6] pt-[510px]">
            <div className="ml-[6px] h-[479px] w-4 rounded-full bg-[#c1c1c1]" />
          </div>
        </div>
        <Shelf />
      </div>
      <div className="mt-[10px]"><Dock /></div>
    </div>
  );
}
